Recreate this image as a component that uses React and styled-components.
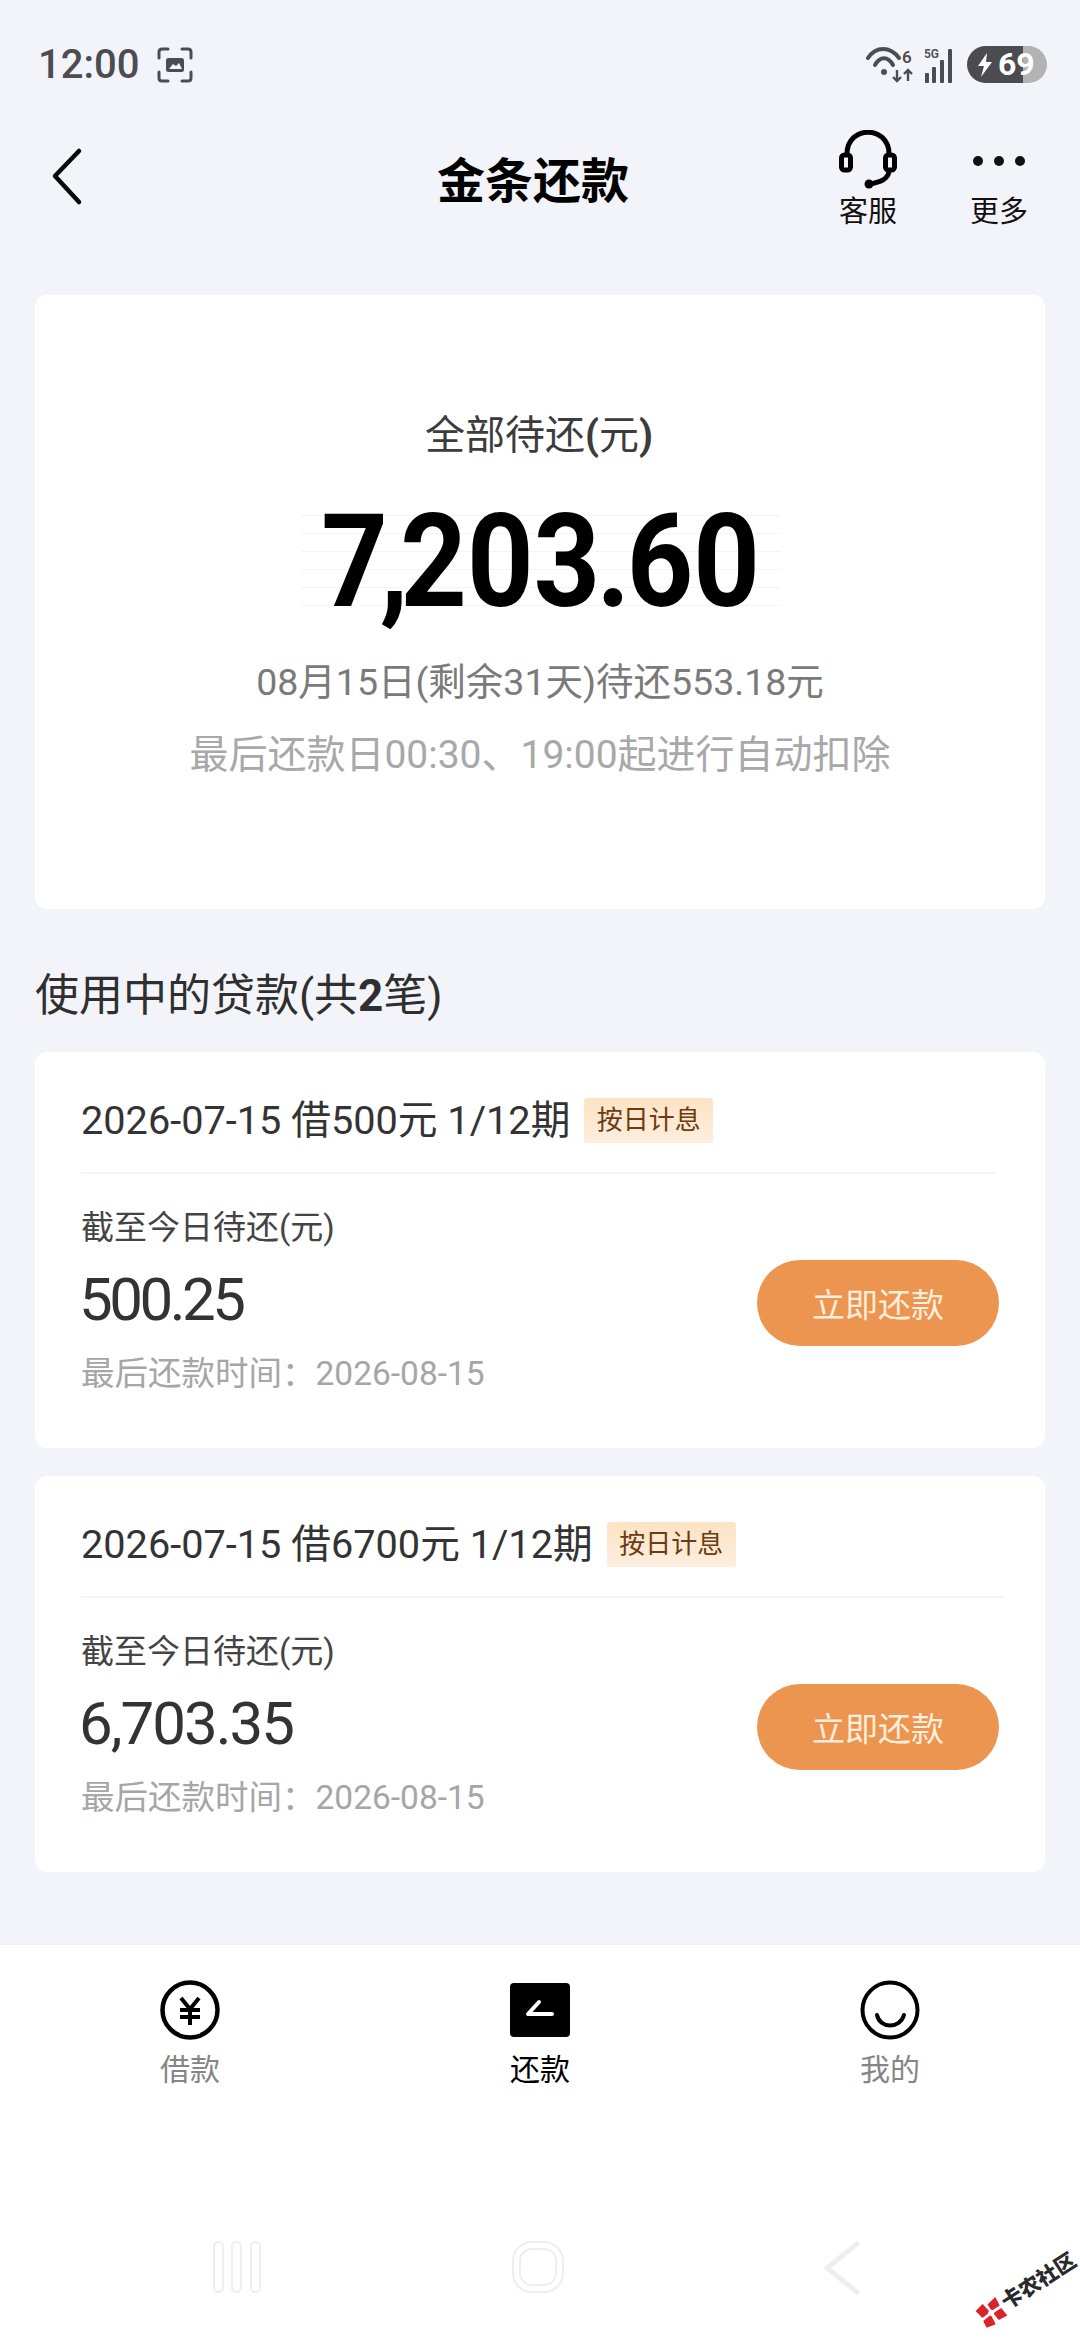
import React from 'react';
import styled, { createGlobalStyle } from 'styled-components';

const GlobalStyle = createGlobalStyle`
  html, body {
    margin: 0;
    padding: 0;
    background: #f3f4f9;
  }
  * {
    box-sizing: border-box;
  }
`;

const FONT = `Roboto, "Noto Sans CJK SC", sans-serif`;

const Page = styled.div`
  position: relative;
  width: 1080px;
  height: 2340px;
  display: flex;
  flex-direction: column;
  overflow: hidden;
  background: #f3f4f9;
  font-family: ${FONT};
`;

const StatusBar = styled.div`
  height: 110px;
  padding: 46px 33px 0 38px;
  display: flex;
  align-items: flex-start;
  justify-content: space-between;
`;

const StatusGroup = styled.div`
  display: flex;
  align-items: center;
  gap: 10px;
`;

const Clock = styled.span`
  font-size: 40px;
  line-height: 37px;
  font-weight: 500;
  color: #4c4c51;
  margin-right: 8px;
`;

const Battery = styled.div`
  width: 80px;
  height: 37px;
  border-radius: 19px;
  background: linear-gradient(90deg, #4b4b50 0 70%, #b3b3b6 70% 100%);
  display: flex;
  align-items: center;
  padding-left: 10px;
  gap: 5px;
  color: #fff;
  font-size: 32px;
  line-height: 37px;
  font-weight: 700;
`;

const TopBar = styled.div`
  height: 185px;
  display: flex;
  align-items: flex-start;
  padding-right: 51px;
`;

const BackSlot = styled.div`
  width: 228px;
  padding: 37px 0 0 50px;
`;

const Title = styled.h1`
  flex: 1;
  margin: 45px 0 0;
  text-align: center;
  font-size: 48px;
  line-height: 54px;
  font-weight: 700;
  color: #000;
`;

const Actions = styled.div`
  display: flex;
  gap: 71px;
`;

const Action = styled.div`
  width: 60px;
  padding-top: 20px;
  display: flex;
  flex-direction: column;
  align-items: center;
  font-size: 29px;
  line-height: 34px;
  color: #111;
  white-space: nowrap;
`;

const ActionIcon = styled.div`
  display: flex;
  align-items: flex-start;
  height: 63px;
  margin-bottom: 2px;
  padding-top: ${(p) => p.$top || 0}px;
`;

const Main = styled.main`
  padding: 0 35px;
  flex: 1;
`;

const SummaryCard = styled.section`
  height: 614px;
  background: #fff;
  border-radius: 12px;
  padding-top: 116px;
  display: flex;
  flex-direction: column;
  align-items: center;
`;

const SummaryLabel = styled.div`
  font-size: 40px;
  line-height: 50px;
  color: #3c3c3c;
  margin-left: -2px;
`;

const AmountWrap = styled.div`
  width: 480px;
  height: 110px;
  margin: 46px 0 40px 2px;
  display: flex;
  justify-content: center;
  background: repeating-linear-gradient(180deg, #fff 0 17px, #f4f4f4 17px 18px);
  background-position: 0 -9px;
`;

const Amount = styled.div`
  font-size: 129px;
  line-height: 110px;
  font-weight: 700;
  color: #000;
  transform: scaleX(0.9);
  white-space: nowrap;
`;

const AmountTight = styled.span`
  letter-spacing: ${(p) => p.$gap}px;
`;

const SummaryLine = styled.div`
  font-size: ${(p) => p.$size}px;
  line-height: 50px;
  color: ${(p) => p.$color};
  margin-top: ${(p) => p.$top || 0}px;
  white-space: nowrap;
`;

const SectionTitle = styled.h2`
  margin: 59px 0 0;
  height: 84px;
  font-size: 44px;
  line-height: 56px;
  font-weight: 400;
  color: #2f2f2f;
  white-space: nowrap;
`;

const Strong = styled.span`
  font-weight: 700;
`;

const LoanCard = styled.article`
  height: 396px;
  margin-bottom: 28px;
  background: #fff;
  border-radius: 12px;
  padding: 46px 46px 0;
`;

const LoanHead = styled.div`
  width: ${(p) => p.$width}px;
  height: 76px;
  border-bottom: 2px solid #f5f5f7;
  display: flex;
  align-items: flex-start;
  gap: 14px;
`;

const LoanTitle = styled.span`
  font-size: 39.7px;
  line-height: 46px;
  color: #333;
  white-space: nowrap;
`;

const Badge = styled.span`
  width: 129px;
  height: 45px;
  border-radius: 3px;
  background: linear-gradient(180deg, #fde3c4, #fdeede);
  color: #6d3b12;
  font-size: 26px;
  line-height: 45px;
  text-align: center;
`;

const LoanBody = styled.div`
  display: flex;
  align-items: center;
  justify-content: space-between;
  padding: 32px 0 0;
`;

const LoanInfo = styled.div`
  display: flex;
  flex-direction: column;
`;

const DueLabel = styled.div`
  font-size: 33px;
  line-height: 44px;
  color: #444;
`;

const DueAmount = styled.div`
  margin: 17px 0 0 -2px;
  font-size: 60px;
  line-height: 66px;
  color: #333;
  font-weight: 400;
  letter-spacing: ${(p) => p.$tracking}px;
`;

const DueDate = styled.div`
  margin-top: 19px;
  font-size: 33.5px;
  line-height: 44px;
  color: #a6a6a6;
  white-space: nowrap;
`;

const PayButton = styled.button`
  width: 242px;
  height: 86px;
  margin-top: 4px;
  border: 0;
  border-radius: 43px;
  background: #ec9550;
  color: #fdeedd;
  font-family: ${FONT};
  font-size: 33px;
`;

const BottomArea = styled.div`
  height: 397px;
  background: #fff;
  border-top: 2px solid #f0f0f3;
  display: flex;
  flex-direction: column;
`;

const Tabs = styled.nav`
  height: 295px;
  padding: 35px 0 0 160px;
  display: flex;
  gap: 290px;
`;

const Tab = styled.div`
  width: 60px;
  display: flex;
  flex-direction: column;
  align-items: center;
  font-size: 30px;
  line-height: 38px;
  color: ${(p) => (p.$active ? '#000' : '#858585')};
  white-space: nowrap;
`;

const TabIcon = styled.div`
  height: 71px;
`;

const SystemNav = styled.div`
  padding-left: 211px;
  display: flex;
`;

const SystemSlot = styled.div`
  width: ${(p) => p.$width}px;
`;

const Watermark = styled.div`
  position: absolute;
  right: -3px;
  bottom: 31px;
  width: 112px;
  height: 40px;
  display: flex;
  align-items: center;
  gap: 2px;
  transform: rotate(-33deg);
  font-size: 21px;
  line-height: 26px;
  font-weight: 900;
  color: #2a2a2a;
  white-space: nowrap;
`;

const BackIcon = () => (
  <svg width="34" height="60" viewBox="0 0 34 60" fill="none">
    <path d="M29 4 L5 29 L29 55" stroke="#0a0a0a" strokeWidth="4.5" strokeLinecap="round" strokeLinejoin="round" />
  </svg>
);

const HeadsetIcon = () => (
  <svg width="60" height="60" viewBox="0 0 60 60" fill="none">
    <path d="M9 24 C9 -5 51 -5 51 24" stroke="#000" strokeWidth="5" />
    <rect x="3.5" y="25" width="9" height="15" rx="3" stroke="#000" strokeWidth="5" />
    <rect x="47.5" y="25" width="9" height="15" rx="3" stroke="#000" strokeWidth="5" />
    <path d="M51 42 C49 50 42 52 32 54" stroke="#000" strokeWidth="5" />
    <circle cx="31" cy="54" r="4.5" fill="#000" />
  </svg>
);

const DotsIcon = () => (
  <svg width="54" height="12" viewBox="0 0 54 12" fill="#111">
    <circle cx="6" cy="6" r="5" />
    <circle cx="27" cy="6" r="5" />
    <circle cx="48" cy="6" r="5" />
  </svg>
);

const ScreenshotIcon = () => (
  <svg width="36" height="36" viewBox="0 0 36 36" fill="none">
    <path
      d="M11 2 H5 Q2 2 2 5 V11 M25 2 H31 Q34 2 34 5 V11 M11 34 H5 Q2 34 2 31 V25 M25 34 H31 Q34 34 34 31 V25"
      stroke="#4c4c51"
      strokeWidth="3"
      strokeLinecap="round"
    />
    <rect x="9" y="11" width="18" height="14" rx="2.5" fill="#4c4c51" />
    <path d="M12 22 L16 17 L19 19 L22 16 L25 22 Z" fill="#f3f4f9" />
  </svg>
);

const WifiIcon = () => (
  <svg width="48" height="36" viewBox="0 0 48 36" fill="none">
    <path d="M2 11 C10 -1 24 -1 33 11" stroke="#4c4c51" strokeWidth="4" strokeLinecap="round" />
    <path d="M9 18 C14 9 22 9 27 18" stroke="#4c4c51" strokeWidth="4" strokeLinecap="round" />
    <circle cx="18" cy="25" r="3" fill="#4c4c51" />
    <path d="M31 23 V34 M27 30 L31 34 L35 30 M42 34 V23 M38 27 L42 23 L46 27" stroke="#4c4c51" strokeWidth="2.4" />
    <text x="36" y="16" fontSize="17" fontWeight="600" fill="#4c4c51" fontFamily="Roboto, sans-serif">6</text>
  </svg>
);

const SignalIcon = () => (
  <svg width="33" height="36" viewBox="0 0 33 36" fill="#4c4c51">
    <rect x="1" y="26" width="4" height="10" rx="1" />
    <rect x="8" y="20" width="4" height="16" rx="1" />
    <rect x="16" y="13" width="4" height="23" rx="1" />
    <rect x="24" y="2" width="4" height="34" rx="1" />
    <text x="0" y="11" fontSize="12" fontWeight="600" fontFamily="Roboto, sans-serif">5G</text>
  </svg>
);

const BoltIcon = () => (
  <svg width="16" height="24" viewBox="0 0 16 24" fill="#fff">
    <path d="M10 0 L1 13 H7 L4 24 L15 9 H9 Z" />
  </svg>
);

const YenIcon = () => (
  <svg width="60" height="60" viewBox="0 0 60 60" fill="none">
    <circle cx="30" cy="30" r="27.5" stroke="#000" strokeWidth="4.5" />
    <path d="M21 18 L30 29 L39 18 M30 29 V45 M20 30 H40 M20 37 H40" stroke="#000" strokeWidth="4" />
  </svg>
);

const RepayIcon = () => (
  <svg width="60" height="60" viewBox="0 0 60 60">
    <rect x="0" y="3" width="60" height="54" rx="4" fill="#000" />
    <path d="M29 22 L18 34 H42" stroke="#fff" strokeWidth="4" fill="none" strokeLinecap="round" strokeLinejoin="round" />
  </svg>
);

const SmileIcon = () => (
  <svg width="60" height="60" viewBox="0 0 60 60" fill="none">
    <circle cx="30" cy="30" r="27.5" stroke="#000" strokeWidth="4" />
    <path d="M17 35 C20 49 40 49 44 35" stroke="#000" strokeWidth="4" strokeLinecap="round" />
  </svg>
);

const RecentsIcon = () => (
  <svg width="50" height="54" viewBox="0 0 50 54" fill="none" stroke="#eeeeee" strokeWidth="2">
    <rect x="3" y="2" width="9" height="50" rx="4.5" />
    <rect x="21" y="2" width="9" height="50" rx="4.5" />
    <rect x="40" y="2" width="9" height="50" rx="4.5" />
  </svg>
);

const HomeIcon = () => (
  <svg width="54" height="54" viewBox="0 0 54 54" fill="none" stroke="#eeeeee" strokeWidth="2">
    <rect x="2" y="2" width="50" height="50" rx="19" />
    <rect x="9" y="9" width="36" height="36" rx="12" />
  </svg>
);

const SystemBackIcon = () => (
  <svg width="40" height="56" viewBox="0 0 40 56" fill="none" stroke="#eeeeee" strokeWidth="5" strokeLinecap="round" strokeLinejoin="round">
    <path d="M35 4 L5 28 L35 52" />
  </svg>
);

const WatermarkLogo = () => (
  <svg width="27" height="27" viewBox="0 0 27 27">
    <path d="M1 3 L11 1 L13 12 L3 13 Z" fill="#d8232a" />
    <path d="M15 4 L26 2 L25 12 L15 12 Z" fill="#d8232a" />
    <path d="M2 16 L12 15 L11 26 L1 24 Z" fill="#d8232a" />
    <path d="M15 15 L25 15 L26 25 L16 24 Z" fill="#d8232a" />
    <circle cx="13.5" cy="13.5" r="3" fill="#fff" />
  </svg>
);

const loans = [
  { id: 1, title: '2026-07-15 借500元 1/12期', amount: '500.25', tracking: -3.5, lineWidth: 914 },
  { id: 2, title: '2026-07-15 借6700元 1/12期', amount: '6,703.35', tracking: -2, lineWidth: 924 },
];

const tabs = [
  { label: '借款', icon: <YenIcon /> },
  { label: '还款', icon: <RepayIcon />, active: true },
  { label: '我的', icon: <SmileIcon /> },
];

const App = () => (
  <Page>
    <GlobalStyle />
    <StatusBar>
      <StatusGroup>
        <Clock>12:00</Clock>
        <ScreenshotIcon />
      </StatusGroup>
      <StatusGroup>
        <WifiIcon />
        <SignalIcon />
        <Battery>
          <BoltIcon />
          69
        </Battery>
      </StatusGroup>
    </StatusBar>

    <TopBar>
      <BackSlot>
        <BackIcon />
      </BackSlot>
      <Title>金条还款</Title>
      <Actions>
        <Action>
          <ActionIcon>
            <HeadsetIcon />
          </ActionIcon>
          客服
        </Action>
        <Action>
          <ActionIcon $top={25}>
            <DotsIcon />
          </ActionIcon>
          更多
        </Action>
      </Actions>
    </TopBar>

    <Main>
      <SummaryCard>
        <SummaryLabel>
          全部待还<Strong>(</Strong>元<Strong>)</Strong>
        </SummaryLabel>
        <AmountWrap>
          <Amount>
            <AmountTight $gap={-9}>7,</AmountTight>20<AmountTight $gap={-4}>3.</AmountTight>60
          </Amount>
        </AmountWrap>
        <SummaryLine $size={37.5} $color="#7a7a7a">08月15日(剩余31天)待还553.18元</SummaryLine>
        <SummaryLine $size={39} $color="#a8a8a8" $top={23}>最后还款日00:30、19:00起进行自动扣除</SummaryLine>
      </SummaryCard>

      <SectionTitle>
        使用中的贷款(共<Strong>2</Strong>笔)
      </SectionTitle>

      {loans.map((loan) => (
        <LoanCard key={loan.id}>
          <LoanHead $width={loan.lineWidth}>
            <LoanTitle>{loan.title}</LoanTitle>
            <Badge>按日计息</Badge>
          </LoanHead>
          <LoanBody>
            <LoanInfo>
              <DueLabel>截至今日待还(元)</DueLabel>
              <DueAmount $tracking={loan.tracking}>{loan.amount}</DueAmount>
              <DueDate>最后还款时间：2026-08-15</DueDate>
            </LoanInfo>
            <PayButton>立即还款</PayButton>
          </LoanBody>
        </LoanCard>
      ))}
    </Main>

    <BottomArea>
      <Tabs>
        {tabs.map((tab) => (
          <Tab key={tab.label} $active={tab.active}>
            <TabIcon>{tab.icon}</TabIcon>
            {tab.label}
          </Tab>
        ))}
      </Tabs>
      <SystemNav>
        <SystemSlot $width={300}>
          <RecentsIcon />
        </SystemSlot>
        <SystemSlot $width={311}>
          <HomeIcon />
        </SystemSlot>
        <SystemSlot $width={40}>
          <SystemBackIcon />
        </SystemSlot>
      </SystemNav>
    </BottomArea>

    <Watermark>
      <WatermarkLogo />
      卡农社区
    </Watermark>
  </Page>
);

export default App;
